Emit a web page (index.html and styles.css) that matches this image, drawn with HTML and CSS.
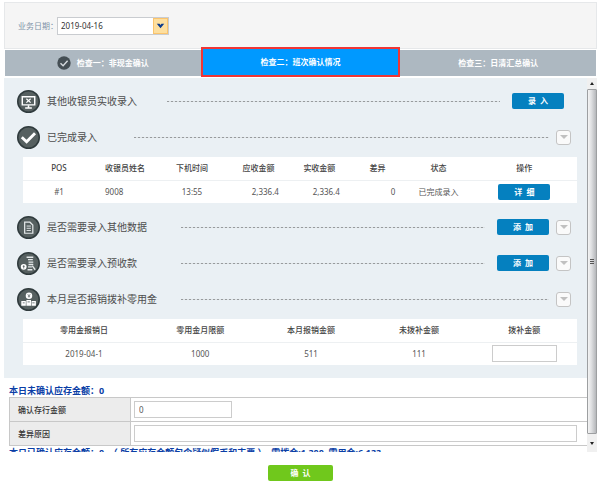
FILE: index.html
```html
<!DOCTYPE html>
<html lang="zh-CN">
<head>
    <meta charset="UTF-8">
    <meta name="viewport" content="width=device-width, initial-scale=1.0">
    <title>班次确认情况</title>
    <link rel="stylesheet" href="styles.css">
</head>
<body>

    <!-- Date filter -->
    <div class="toolbar">
        <label for="bizDate">业务日期：</label>
        <div class="date-box">
            <select id="bizDate">
                <option>2019-04-16</option>
            </select>
            <svg class="date-arrow" viewBox="0 0 14 14"><path d="M3 4.500h3l1 1.500 1-1.500h3L7 9.500z" fill="#0b3a8c"/></svg>
        </div>
    </div>

    <!-- Steps -->
    <nav class="tabs">
        <a href="#" class="tab">
            <svg class="tab-icon" viewBox="0 0 14 14"><circle cx="7" cy="7" r="6.700" fill="#454f55"/><path d="M3.500 7.200l2.600 2.500 4.500-5" fill="none" stroke="#d5dade" stroke-width="1.400"/></svg>
            检查一：非现金确认
        </a>
        <a href="#" class="tab active">检查二：班次确认情况</a>
        <a href="#" class="tab">检查三：日清汇总确认</a>
    </nav>

    <main class="viewport">
        <div class="content">
            <section class="panel">
                <div class="row row-single">
                    <svg class="icon" viewBox="0 0 24 24">
                        <circle cx="12" cy="12" r="11.200" fill="#566060" stroke="#303b3d" stroke-width="1.600"/>
                        <path d="M5.500 7h13v8.500h-13z" fill="none" stroke="#fff" stroke-width="1.500"/>
                        <path d="M12 16v2.500M8.500 18.700h7" stroke="#fff" stroke-width="1.600"/>
                        <path d="M9.800 9.200l4.400 4M14.200 9.200l-4.400 4" stroke="#fff" stroke-width="1.300"/>
                    </svg>
                    <h2>其他收银员实收录入</h2>
                    <span class="line"></span>
                    <button class="btn">录&nbsp; 入</button>
                </div>

                <div class="row">
                    <svg class="icon" viewBox="0 0 24 24">
                        <circle cx="12" cy="12" r="11.200" fill="#566060" stroke="#303b3d" stroke-width="1.600"/>
                        <path d="M5 11.800l5 4.700L18.800 7.500" fill="none" stroke="#fff" stroke-width="3"/>
                    </svg>
                    <h2 class="short">已完成录入</h2>
                    <span class="line"></span>
                    <button class="toggle" aria-label="展开"></button>
                </div>

                <table class="grid">
                    <colgroup>
                        <col class="w13"><col class="w11"><col class="w13"><col class="w11">
                        <col class="w11"><col class="w10"><col class="w12"><col class="w19">
                    </colgroup>
                    <thead>
                        <tr>
                            <th>POS</th>
                            <th class="left">收银员姓名</th>
                            <th>下机时间</th>
                            <th>应收金额</th>
                            <th>实收金额</th>
                            <th>差异</th>
                            <th>状态</th>
                            <th>操作</th>
                        </tr>
                    </thead>
                    <tbody>
                        <tr>
                            <td>#1</td>
                            <td class="left">9008</td>
                            <td>13:55</td>
                            <td class="num">2,336.4</td>
                            <td class="num">2,336.4</td>
                            <td class="num">0</td>
                            <td>已完成录入</td>
                            <td><button class="btn">详&nbsp; 细</button></td>
                        </tr>
                    </tbody>
                </table>

                <div class="row">
                    <svg class="icon" viewBox="0 0 24 24">
                        <circle cx="12" cy="12" r="11.200" fill="#566060" stroke="#303b3d" stroke-width="1.600"/>
                        <path d="M8 6.500h5.500L16.500 9.500v8.500H8z" fill="none" stroke="#e4e8e9" stroke-width="1.300"/>
                        <path d="M10 10.500h4.500M10 12.800h4.500M10 15.100h4.500" stroke="#e4e8e9"/>
                    </svg>
                    <h2 class="long">是否需要录入其他数据</h2>
                    <span class="line"></span>
                    <button class="btn">添&nbsp; 加</button>
                    <button class="toggle" aria-label="展开"></button>
                </div>

                <div class="row">
                    <svg class="icon" viewBox="0 0 24 24">
                        <circle cx="12" cy="12" r="11.200" fill="#566060" stroke="#303b3d" stroke-width="1.600"/>
                        <path d="M10 5.500h7M11.500 8h5M12 10.500h5M12 13h5M11.500 15.500h4M11 18.500h5M16 14.500l3 4" stroke="#e4e8e9" stroke-width="1.400"/>
                        <circle cx="7" cy="15.500" r="3" fill="#fff"/>
                        <path d="M7 13.800v3.400M6 15h2" stroke="#4b5557" stroke-width=".8"/>
                    </svg>
                    <h2 class="long">是否需要录入预收款</h2>
                    <span class="line"></span>
                    <button class="btn">添&nbsp; 加</button>
                    <button class="toggle" aria-label="展开"></button>
                </div>

                <div class="row">
                    <svg class="icon" viewBox="0 0 24 24">
                        <circle cx="12" cy="12" r="11.200" fill="#566060" stroke="#303b3d" stroke-width="1.600"/>
                        <circle cx="12.500" cy="8" r="3.400" fill="#fff"/>
                        <path d="M11.200 6.500l1.300 1.500 1.300-1.500M12.500 8v2M11.300 8.500h2.400" fill="none" stroke="#4b5557" stroke-width=".7"/>
                        <path d="M4.500 13.500h4.700v5H4.500zM9.800 12.500h4.800v6H9.800zM15.200 13.500h4.500v5h-4.500z" fill="#fff"/>
                        <path d="M6 15.500h2M11 14.500h2.400M16 15.500h2.400" stroke="#4b5557" stroke-width=".8"/>
                    </svg>
                    <h2 class="long">本月是否报销拨补零用金</h2>
                    <span class="line"></span>
                    <button class="toggle" aria-label="展开"></button>
                </div>

                <table class="grid">
                    <colgroup>
                        <col class="w22"><col class="w20"><col class="w20"><col class="w19"><col class="w19">
                    </colgroup>
                    <thead>
                        <tr>
                            <th>零用金报销日</th>
                            <th>零用金月限额</th>
                            <th>本月报销金额</th>
                            <th>未拨补金额</th>
                            <th>拨补金额</th>
                        </tr>
                    </thead>
                    <tbody>
                        <tr>
                            <td>2019-04-1</td>
                            <td>1000</td>
                            <td>511</td>
                            <td>111</td>
                            <td><input type="text" class="grid-input" aria-label="拨补金额"></td>
                        </tr>
                    </tbody>
                </table>
            </section>

            <!-- Bank deposit -->
            <section class="deposit">
                <h3>本日未确认应存金额：0</h3>
                <table class="form">
                    <tr>
                        <th><label for="amount">确认存行金额</label></th>
                        <td><input type="text" id="amount" class="amount" value="0"></td>
                    </tr>
                    <tr>
                        <th><label for="reason">差异原因</label></th>
                        <td><input type="text" id="reason" class="reason"></td>
                    </tr>
                </table>
                <h3>本日已确认应存金额：0&nbsp; （ 所有应存金额包含疑似假币和支票 ）&nbsp; 零拨金:1,300&nbsp; 零用金:6,133</h3>
            </section>
        </div>

        <div class="scrollbar">
            <span class="arrow up"></span>
            <span class="thumb"></span>
            <span class="arrow down"></span>
        </div>
    </main>

    <footer>
        <button class="confirm">确&nbsp; 认</button>
    </footer>

</body>
</html>
```
FILE: styles.css
```css
/* Global Styling */
* {
    margin: 0;
    padding: 0;
    box-sizing: border-box;
    font-family: 'Noto Sans', 'Noto Sans CJK SC', sans-serif;
}

body {
    display: flex;
    flex-direction: column;
    height: 100vh;
    padding: 2px 3px 0 4px;
    background: #fff;
    color: #555;
    font-size: 8px;
    line-height: 12px;
}

/* Date filter */
.toolbar {
    display: flex;
    align-items: center;
    flex: none;
    height: 47px;
    padding-left: 13px;
    background: #f5f5f5;
    border: 1px solid #e6e8ea;
}

.toolbar label {
    width: 39px;
    color: #7f93a8;
    white-space: nowrap;
}

.date-box {
    position: relative;
    width: 112px;
    height: 18px;
}

.date-box select {
    appearance: none;
    display: block;
    width: 100%;
    height: 100%;
    padding-left: 3px;
    border: 1px solid #c9ccd0;
    border-radius: 0;
    background: #fff;
    color: #333;
    font-size: 8px;
}

.date-arrow {
    position: absolute;
    top: 1px;
    right: 1px;
    width: 15px;
    height: 16px;
    border: 1px solid #fbc46c;
    background: #fddf9f;
    pointer-events: none;
}

/* Steps */
.tabs {
    display: flex;
    flex: none;
    height: 30px;
    margin: -2px 1px 1px;
}

.tab {
    display: flex;
    align-items: center;
    justify-content: center;
    gap: 6px;
    flex: 1;
    margin: 3px 0 1px;
    background: #adb8c1;
    color: #fff;
    font-weight: bold;
    text-decoration: none;
}

.tab.active {
    margin: 0;
    background: #0099ff;
    border: 2px solid #f03535;
}

.tab-icon {
    width: 14px;
    height: 14px;
}

/* Scrolling area */
.viewport {
    display: flex;
    flex: 1;
    min-height: 0;
    overflow: hidden;
}

.content {
    flex: 1;
    overflow: hidden;
}

.scrollbar {
    display: flex;
    flex-direction: column;
    width: 10px;
    background: #f0f0f0;
}

.thumb {
    display: flex;
    flex: 1;
    border: 1px solid #9d9fa1;
    border-radius: 1px;
    background: linear-gradient(to right, #f4f4f4, #e0e1e3 40%, #b5b7ba);
}

.thumb::after {
    content: "";
    width: 4px;
    height: 5px;
    margin: auto;
    background: repeating-linear-gradient(#555 0 1px, transparent 1px 2px);
}

.arrow {
    display: flex;
    align-items: center;
    justify-content: center;
    height: 11px;
}

.arrow.down {
    height: 18px;
}

.arrow::before {
    content: "";
    border: 2px solid transparent;
}

.arrow.up::before {
    border-top: 0;
    border-bottom: 3px solid #222;
}

.arrow.down::before {
    border-bottom: 0;
    border-top: 3px solid #222;
}

/* Sections */
.panel {
    padding: 5px 10px 7px 13px;
    background: #eaf0f4;
}

.row {
    display: flex;
    align-items: center;
    gap: 7px;
    height: 36px;
    padding-right: 6px;
}

.row-single {
    padding-right: 13px;
}

.icon {
    flex: none;
    width: 23px;
    height: 23px;
}

.row h2 {
    width: 113px;
    color: #4d4d4d;
    font-size: 10px;
    font-weight: normal;
    line-height: 16px;
    white-space: nowrap;
}

.row h2.short {
    width: 80px;
}

.row h2.long {
    width: 127px;
}

.line {
    flex: 1;
    height: 1px;
    background: repeating-linear-gradient(to right, #989b9d 0 2px, #dde2e5 2px 4px);
}

.btn,
.confirm {
    border: none;
    border-radius: 2px;
    background: #0580bf;
    color: #fff;
    font-size: 8px;
    font-weight: bold;
    line-height: 12px;
    cursor: pointer;
}

.btn {
    width: 52px;
    height: 16px;
}

.row .btn {
    margin-left: 5px;
}

.toggle {
    display: flex;
    align-items: center;
    justify-content: center;
    width: 15px;
    height: 15px;
    border: 1px solid #c4c4c4;
    border-radius: 3px;
    background: #fafafa;
    cursor: pointer;
}

.toggle::before {
    content: "";
    border: 4px solid transparent;
    border-top-color: #c0c0c0;
    border-bottom: 0;
}

/* Data tables */
.grid {
    width: calc(100% - 6px);
    margin: 2px 0 6px 6px;
    table-layout: fixed;
    border-collapse: collapse;
    background: #fff;
}

.grid th,
.grid td {
    height: 23px;
    text-align: center;
    vertical-align: middle;
    white-space: nowrap;
}

.grid th {
    color: #444;
    font-weight: 500;
    border-bottom: 1px solid #edf0f2;
}

.grid .left {
    padding-left: 10px;
    text-align: left;
}

.grid .num {
    padding-right: 10px;
    text-align: right;
}

.grid .btn,
.grid-input {
    display: block;
    margin: 0 auto;
}

.grid-input {
    width: 65px;
    height: 17px;
}

.w10 { width: 10%; }
.w11 { width: 11%; }
.w12 { width: 12%; }
.w13 { width: 13%; }
.w19 { width: 19%; }
.w20 { width: 20%; }
.w22 { width: 22%; }

input {
    padding: 0 4px;
    border: 1px solid #ccc;
    background: #fff;
    color: #555;
    font-size: 8px;
}

/* Bank deposit */
.deposit {
    padding: 6px 0 0 5px;
}

.deposit h3 {
    color: #0a3ea6;
    font-size: 9px;
    line-height: 13px;
    white-space: nowrap;
}

.form {
    width: 100%;
    border-collapse: collapse;
}

.form th,
.form td {
    height: 24px;
    border: 1px solid #c8c8c8;
    border-right: none;
}

.form th {
    width: 121px;
    padding-left: 8px;
    background: #ececec;
    color: #333;
    font-weight: 500;
    text-align: left;
}

.form td {
    padding: 0 10px 0 3px;
}

.form input {
    display: block;
    height: 17px;
}

.amount {
    width: 98px;
}

.reason {
    width: 100%;
}

/* Footer */
footer {
    flex: none;
    height: 33px;
    padding-top: 13px;
    text-align: center;
}

.confirm {
    display: block;
    width: 65px;
    height: 16px;
    margin: 0 auto;
    background: #70c81c;
}
```
